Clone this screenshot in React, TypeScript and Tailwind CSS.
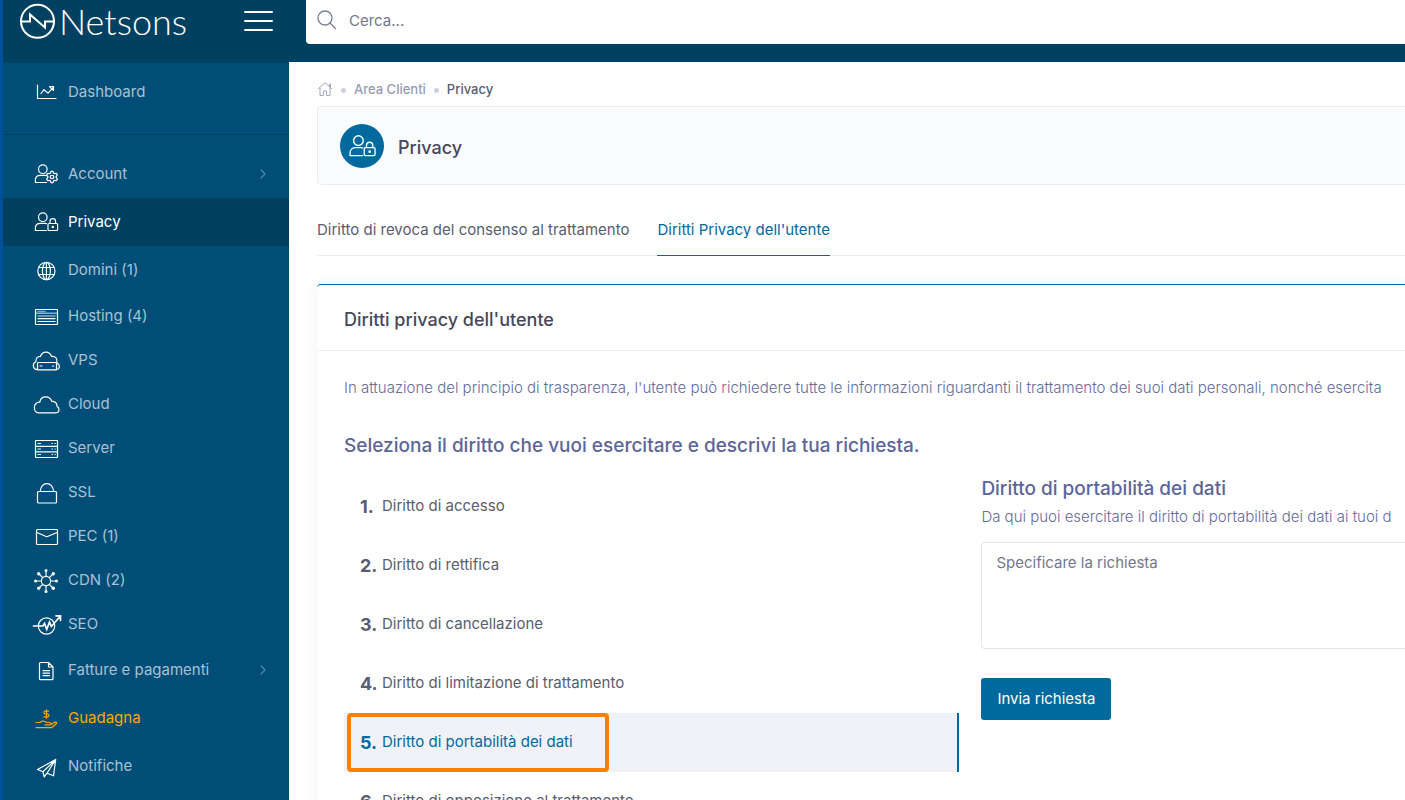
import { useState } from "react";
import type { ReactNode } from "react";
import clsx from "clsx";
import { ChevronRight, DollarSign, Settings } from "lucide-react";

interface NavItem {
  label: string;
  icon: ReactNode;
  tall?: boolean;
  active?: boolean;
  highlight?: boolean;
  expandable?: boolean;
}

const Glyph = ({
  children,
  className = "size-8",
}: {
  children: ReactNode;
  className?: string;
}) => (
  <svg
    viewBox="0 0 32 32"
    className={clsx("shrink-0", className)}
    fill="none"
    stroke="currentColor"
    strokeWidth={1.2}
    strokeLinecap="round"
    strokeLinejoin="round"
    aria-hidden="true"
  >
    {children}
  </svg>
);

const userShape = (
  <>
    <circle cx="12.8" cy="11.2" r="4.3" />
    <path d="M16.5 24.5H5.4V22c0-3 2.3-4.6 5-4.6h4.6c.8 0 1.2.1 1.6.2" />
  </>
);

const UserLock = ({ className }: { className?: string }) => (
  <Glyph className={className}>
    {userShape}
    <rect x="18" y="17.5" width="9.6" height="7" rx="1" />
    <path d="M20 17.5v-2a2.8 2.8 0 0 1 5.6 0v2" />
    <circle cx="22.8" cy="21" r=".6" fill="currentColor" />
  </Glyph>
);

const DashboardIcon = () => (
  <Glyph>
    <path d="M7.5 9v13.5H26M11 17.5l3-3.8 4 3.4 5.5-6" />
    <path d="M19.5 10.5h4v4z" />
  </Glyph>
);

const navItems: NavItem[] = [
  {
    label: "Account",
    tall: true,
    expandable: true,
    icon: (
      <Glyph>
        {userShape}
        <Settings x={15} y={12} width={14} height={14} strokeWidth={2.1} />
      </Glyph>
    ),
  },
  { label: "Privacy", tall: true, active: true, icon: <UserLock /> },
  {
    label: "Domini (1)",
    tall: true,
    icon: (
      <Glyph>
        <circle cx="16.4" cy="17" r="8.6" />
        <ellipse cx="16.4" cy="17" rx="4" ry="8.6" />
        <path d="M16.4 8.4v17.2M9 13.5h14.8M9 20.5h14.8" />
      </Glyph>
    ),
  },
  {
    label: "Hosting (4)",
    icon: (
      <Glyph>
        <rect x="5.5" y="9.5" width="22" height="15" rx=".5" />
        <path d="M8 11.5h7" strokeWidth="1.6" opacity=".5" />
        <path d="M6 13.2h21M8 16h17" strokeWidth="1.6" opacity=".55" />
        <path d="M8 18.7h17M8 21.5h17" />
      </Glyph>
    ),
  },
  {
    label: "VPS",
    icon: (
      <Glyph>
        <rect x="7.5" y="18.5" width="19" height="7.4" rx="1" />
        <path d="M7.5 25.7c-2.6 0-4.2-1.9-4.2-4.1 0-2 1.3-3.2 2.6-3.8-.3-3.6 1.8-5.6 4.6-5.5.9-2.7 3.2-4.2 5.4-4.2 2.9 0 4.8 1.8 5.6 4.3 3.8-.5 6 2.2 5.3 5.4 0 1 .2 1.2 1.2 1.9 2.1 1.5 2 5.6-1.5 6" />
        <path d="M10 22h2M22.5 22h1" />
      </Glyph>
    ),
  },
  {
    label: "Cloud",
    icon: (
      <Glyph>
        <path d="M8.5 24.8H26c2 0 3-1.6 3-3.2 0-1.5-.8-2.7-2-3.2.3-3-1.8-5.2-5.2-5-.9-2.7-3-4.6-6-4.6-3.2 0-5.6 2-6 5.4-3-.3-5.4 2-5.4 5.4 0 2.9 1.7 5.2 4.1 5.2z" />
      </Glyph>
    ),
  },
  {
    label: "Server",
    icon: (
      <Glyph>
        <rect x="5.5" y="8.5" width="22" height="17" rx=".5" />
        <path d="M5.5 14.3h22M5.5 19.8h22M8 11.5h2.5M8 17h2.5M8 22.5h2.5M22 11.5h.5M25 11.5h.3M22 17h.5M25 17h.3M22 22.5h.5M25 22.5h.3" />
      </Glyph>
    ),
  },
  {
    label: "SSL",
    icon: (
      <Glyph>
        <rect x="7.5" y="15.5" width="19" height="11.5" rx="1" />
        <path d="M10.3 15.5c0-4.7 3-7.9 6.6-7.9s6.6 3.2 6.6 7.9" />
      </Glyph>
    ),
  },
  {
    label: "PEC (1)",
    icon: (
      <Glyph>
        <rect x="6.5" y="9.5" width="21" height="15" rx="1" />
        <path d="M7 12.5l8.5 3.8a3 3 0 0 0 2.6 0l9-3.8" />
      </Glyph>
    ),
  },
  {
    label: "CDN (2)",
    icon: (
      <Glyph>
        <circle cx="16" cy="17" r="4.6" />
        <path d="M16 12.4V7M16 21.6V27M11.4 17H6M20.6 17H26M12.7 13.7 9 10M19.3 20.3 23 24M12.7 20.3 9 24M19.3 13.7 23 10" />
        <g fill="currentColor" stroke="none">
          <circle cx="16" cy="6.5" r="1.5" />
          <circle cx="16" cy="27.5" r="1.5" />
          <circle cx="5.5" cy="17" r="1.5" />
          <circle cx="26.5" cy="17" r="1.5" />
          <circle cx="8.7" cy="9.7" r="1.7" />
          <circle cx="23.3" cy="9.7" r="1.7" />
          <circle cx="8.7" cy="24.3" r="1.7" />
          <circle cx="23.3" cy="24.3" r="1.7" />
        </g>
      </Glyph>
    ),
  },
  {
    label: "SEO",
    icon: (
      <Glyph>
        <circle cx="16.5" cy="18" r="8.2" />
        <path
          d="M3.5 18H13l1.5-2.5 2.2 5.8 2.8-7.3 1.8 4.5L30 8.500M26 7.800h4.500v4.500"
          strokeWidth="1.7"
          strokeLinejoin="miter"
        />
      </Glyph>
    ),
  },
  {
    label: "Fatture e pagamenti",
    tall: true,
    expandable: true,
    icon: (
      <Glyph>
        <path d="M18.5 8.500h-8a1 1 0 0 0-1 1v15.200a1 1 0 0 0 1 1H22a1 1 0 0 0 1-1V13zM18.500 8.500V13H23M13 16.700h6.500M13 19.200h6.500M13 21.700h6.500" />
      </Glyph>
    ),
  },
  {
    label: "Guadagna",
    tall: true,
    highlight: true,
    icon: (
      <Glyph>
        <DollarSign x={11.5} y={7} width={10} height={10} strokeWidth={2.8} />
        <path d="M6 20.500h4c2-1.600 4.500-1.700 6.500 0H20c1.300 0 1.300 2.300 0 2.300h-5M20.500 22.500c2.300-.3 3-2.200 5-2.400 1.300 0 1.500 1 .8 1.700L22.500 25c-.6.5-1.200.7-2 .7H6" />
      </Glyph>
    ),
  },
  {
    label: "Notifiche",
    tall: true,
    icon: (
      <Glyph>
        <path d="M25.700 9.500 7.500 19.500l5.500 2.300zM25.700 9.500l-2.200 16.300-6.500-2.600M13 21.800l1.200 5 2.800-3.600 8.700-13.700" />
      </Glyph>
    ),
  },
];

const rights: string[] = [
  "Diritto di accesso",
  "Diritto di rettifica",
  "Diritto di cancellazione",
  "Diritto di limitazione di trattamento",
  "Diritto di portabilità dei dati",
  "Diritto di opposizione al trattamento",
];

const NavLink = ({ item }: { item: NavItem }) => (
  <a
    href="#"
    className={clsx(
      "flex items-center gap-[6px] pr-[18px] pl-[27px]",
      item.tall ? "h-12" : "h-11",
      item.active && "bg-[#004060]",
      item.highlight ? "text-[#ffa800]" : "text-white"
    )}
  >
    {item.icon}
    <span
      className={clsx(
        "flex-1",
        !item.active && !item.highlight && "text-[#a9c1d3]"
      )}
    >
      {item.label}
    </span>
    {item.expandable && (
      <ChevronRight className="size-4 text-[#5485a6]" strokeWidth={1.8} />
    )}
  </a>
);

const Sidebar = () => (
  <aside className="w-[289px] shrink-0 border-l-3 border-[#00509a] bg-[#004e78]">
    <div className="flex h-[63px] items-start justify-between bg-[#004060] px-4 text-white">
      <a href="#" className="flex items-center" aria-label="Netsons">
        <svg
          viewBox="0 0 38 42"
          className="h-[42px] w-[38px]"
          fill="none"
          stroke="currentColor"
          strokeWidth="2"
          aria-hidden="true"
        >
          <circle cx="18.5" cy="21.300" r="16.500" />
          <path d="M2 21.500h9v-7l15 13v-6h9" />
        </svg>
        <span className="pl-[2px] font-['Lato',sans-serif] text-[36px] leading-[42px] font-light">
          Netsons
        </span>
      </a>
      <button
        className="flex h-[42px] flex-col justify-center gap-[7px]"
        aria-label="Menu"
      >
        <span className="h-[2px] w-[29px] rounded bg-white" />
        <span className="h-[2px] w-[29px] rounded bg-white" />
        <span className="h-[2px] w-[29px] rounded bg-white" />
      </button>
    </div>
    <nav>
      <div className="border-b border-[#00405f] pt-[5px] pb-[18px]">
        <NavLink
          item={{ label: "Dashboard", icon: <DashboardIcon />, tall: true }}
        />
      </div>
      <div className="pt-[15px]">
        {navItems.map((item) => (
          <NavLink key={item.label} item={item} />
        ))}
      </div>
    </nav>
  </aside>
);

const App: React.FC = () => {
  const [selected, setSelected] = useState<number>(4);
  const [request, setRequest] = useState<string>("");

  return (
    <div className="flex h-screen overflow-hidden bg-white font-['Inter','Open_Sans',sans-serif] text-[15px] text-[#595d6e]">
      <Sidebar />

      <div className="min-w-0 flex-1">
        <header className="h-[62px] bg-[#004060] pl-[17px]">
          <label className="flex h-11 items-center gap-3 rounded-bl bg-white pb-1 pl-[11px]">
            <svg
              viewBox="0 0 20 20"
              className="size-5 text-[#7a7f9a]"
              fill="none"
              stroke="currentColor"
              strokeWidth="1.3"
              strokeLinecap="round"
              aria-hidden="true"
            >
              <circle cx="8" cy="8" r="7" />
              <path d="M13 13l5.500 5.500" />
            </svg>
            <input
              type="search"
              aria-label="Cerca"
              placeholder="Cerca..."
              className="h-10 min-w-0 flex-1 outline-none placeholder:text-[#74788d]"
            />
          </label>
        </header>

        <main className="pl-7 whitespace-nowrap">
          <div className="flex h-11 items-center gap-2 pt-3 text-[13px] font-medium">
            <a href="#" aria-label="Home" className="text-[#a1a8c3]">
              <svg
                viewBox="0 0 16 16"
                className="size-4"
                fill="none"
                stroke="currentColor"
                strokeLinejoin="round"
                aria-hidden="true"
              >
                <path d="M1 7 8 .8 15 7M3 5.500v8h3.500V9h3v4.500H13v-8M12.500 4.500V2h1v3.300" />
              </svg>
            </a>
            <span className="size-[5px] rounded-full bg-[#cdd0e0]" />
            <a href="#" className="text-[#959cb6]">
              Area Clienti
            </a>
            <span className="size-[5px] rounded-full bg-[#cdd0e0]" />
            <span>Privacy</span>
          </div>

          <div className="flex h-[79px] items-center gap-[14px] rounded-l border border-r-0 border-[#ebedf2] bg-[#fafbfd] pl-[22px]">
            <span className="flex size-11 items-center justify-center rounded-full bg-[#006a9e] text-white">
              <UserLock className="size-9" />
            </span>
            <h1 className="pt-[3px] text-[18px] font-medium text-[#48465b]">
              Privacy
            </h1>
          </div>

          <div className="mt-5 flex gap-7 border-b border-[#ebedf2]">
            <button className="-mb-px h-[51px]">
              Diritto di revoca del consenso al trattamento
            </button>
            <button className="-mb-px h-[51px] border-b border-[#006a9e] text-[#006a9e]">
              Diritti Privacy dell'utente
            </button>
          </div>

          <section className="mt-7 rounded-tl border-t border-[#006a9e] shadow-[0_0_13px_rgba(82,63,105,0.08)]">
            <div className="flex h-[66px] items-center border-b border-[#ebedf2] pl-[27px]">
              <h2 className="pt-[3px] text-[18px] font-medium text-[#48465b]">
                Diritti privacy dell'utente
              </h2>
            </div>
            <div className="pt-[25px] pl-[27px]">
              <p className="overflow-hidden leading-6 font-light text-[#646c9a]">
                In attuazione del principio di trasparenza, l'utente può
                richiedere tutte le informazioni riguardanti il trattamento dei
                suoi dati personali, nonché esercita
              </p>
              <h3 className="mt-[34px] text-[19px] leading-6 font-medium text-[#5d6599]">
                Seleziona il diritto che vuoi esercitare e descrivi la tua
                richiesta.
              </h3>

              <div className="mt-[19px] flex gap-[22px]">
                <ol className="w-[58%] shrink-0">
                  {rights.map((right, index) => (
                    <li key={right} className="relative">
                      <button
                        onClick={() => setSelected(index)}
                        className={clsx(
                          "flex h-[59px] w-full items-center pl-4",
                          selected === index &&
                            "border-r-2 border-[#006a9e] bg-[#f0f2f8] text-[#006a9e]"
                        )}
                      >
                        <span className="w-[22px] text-left text-[18px] font-bold">
                          {index + 1}.
                        </span>
                        {right}
                      </button>
                      {selected === index && (
                        <span className="pointer-events-none absolute inset-y-0 left-[3px] w-[262px] rounded border-4 border-[#ff8000]" />
                      )}
                    </li>
                  ))}
                </ol>

                <div className="min-w-0 flex-1 overflow-hidden">
                  <h3 className="text-[19px] leading-6 font-medium text-[#5d6599]">
                    Diritto di portabilità dei dati
                  </h3>
                  <p className="mt-1 leading-6 font-light text-[#646c9a]">
                    Da qui puoi esercitare il diritto di portabilità dei dati ai
                    tuoi d
                  </p>
                  <textarea
                    aria-label="Specificare la richiesta"
                    placeholder="Specificare la richiesta"
                    value={request}
                    onChange={(e) => setRequest(e.target.value)}
                    className="mt-[13px] block h-[107px] w-full resize-none rounded-l border border-r-0 border-[#e2e5ec] px-[14px] py-2 leading-6 outline-none placeholder:text-[#74788d]"
                  />
                  <button className="mt-[29px] h-[42px] rounded-[3px] bg-[#006a9e] px-4 text-white">
                    Invia richiesta
                  </button>
                </div>
              </div>
            </div>
          </section>
        </main>
      </div>
    </div>
  );
};

export default App;
